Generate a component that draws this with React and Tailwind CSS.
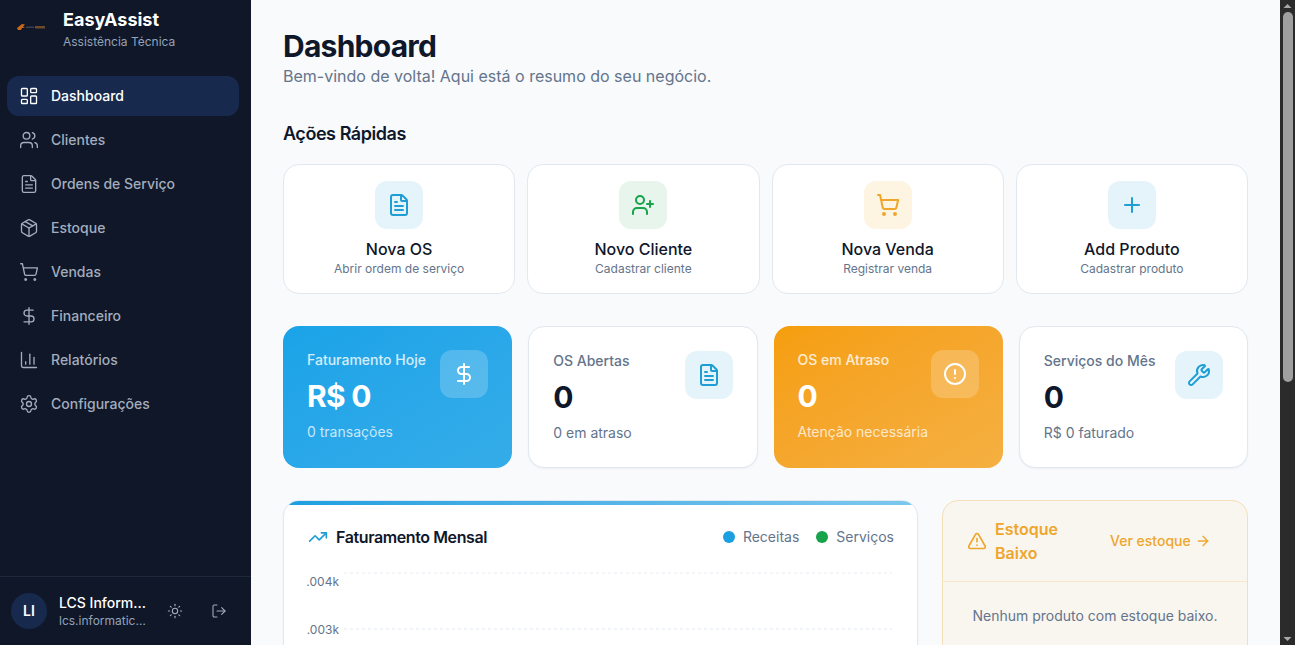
import React from "react";
import {
  LayoutDashboard,
  Users,
  FileText,
  Package,
  ShoppingCart,
  DollarSign,
  ChartColumn,
  Settings,
  Sun,
  LogOut,
  UserPlus,
  Plus,
  CircleAlert,
  Wrench,
  TrendingUp,
  TriangleAlert,
  ArrowRight,
} from "lucide-react";

const navItems = [
  { label: "Dashboard", icon: LayoutDashboard, active: true },
  { label: "Clientes", icon: Users },
  { label: "Ordens de Serviço", icon: FileText },
  { label: "Estoque", icon: Package },
  { label: "Vendas", icon: ShoppingCart },
  { label: "Financeiro", icon: DollarSign },
  { label: "Relatórios", icon: ChartColumn },
  { label: "Configurações", icon: Settings },
];

const quickActions = [
  { title: "Nova OS", sub: "Abrir ordem de serviço", icon: FileText, box: "bg-[#e5f4fb]", color: "text-[#1f9ed6]" },
  { title: "Novo Cliente", sub: "Cadastrar cliente", icon: UserPlus, box: "bg-[#e7f5ec]", color: "text-[#16a34a]" },
  { title: "Nova Venda", sub: "Registrar venda", icon: ShoppingCart, box: "bg-[#fef4e2]", color: "text-[#eea62d]" },
  { title: "Add Produto", sub: "Cadastrar produto", icon: Plus, box: "bg-[#e5f4fb]", color: "text-[#1f9ed6]" },
];

const Sidebar = () => (
  <aside className="w-[251px] h-full shrink-0 flex flex-col bg-[#0f1729]">
    <div className="flex items-center gap-[7px] pl-[16px] pt-[4px] h-[56px]">
      {/* logo is tiny in the shot, just a mark and a smudge of text */}
      <svg width="40" height="40" viewBox="0 0 40 40" className="shrink-0">
        <path d="M1 18 L6 14 L9 14.5 L7 16.5 L9 17.5 L6 18 L5 20 L2 20 Z" fill="#c9691c" />
        <rect x="10" y="16.5" width="8" height="1.5" fill="#3a3f4d" />
        <rect x="19" y="16" width="10" height="2.5" fill="#6e4a2c" />
      </svg>
      <div className="-mt-[4px]">
        <div className="text-lg leading-[28px] font-bold text-white">EasyAssist</div>
        <div className="text-xs leading-[16px] text-[#94a3b8]">Assistência Técnica</div>
      </div>
    </div>
    <nav className="flex flex-col gap-[4px] pl-[7px] pr-[12px] mt-[20px]">
      {navItems.map((item) => (
        <div
          key={item.label}
          className={`h-[40px] flex items-center gap-[12px] px-[12px] rounded-xl text-sm font-medium ${
            item.active ? "bg-[#172a4d] text-white" : "text-[#a3adbd]"
          }`}
        >
          <item.icon className="w-5 h-5 shrink-0" strokeWidth={1.6} />
          {item.label}
        </div>
      ))}
    </nav>
    <div className="mt-auto h-[69px] border-t border-[#1e293b] flex items-center pl-[11px]">
      <div className="w-9 h-9 rounded-full bg-[#172a4d] flex items-center justify-center text-sm font-semibold text-white shrink-0">
        LI
      </div>
      <div className="ml-[12px] w-[88px]">
        <div className="text-sm leading-[20px] font-medium text-white truncate">LCS Informática</div>
        <div className="text-xs leading-[16px] text-[#94a3b8] truncate">lcs.informatica@gmail.com</div>
      </div>
      <Sun className="w-4 h-4 ml-[20px] text-[#a3adbd]" strokeWidth={1.6} />
      <LogOut className="w-4 h-4 ml-[28px] text-[#a3adbd]" strokeWidth={1.6} />
    </div>
  </aside>
);

const QuickCard = ({ title, sub, icon: Icon, box, color }) => (
  <div className="h-[130px] bg-white border border-[#e2e8f0] rounded-2xl flex flex-col items-center pt-[16px]">
    <div className={`w-12 h-12 rounded-xl flex items-center justify-center ${box}`}>
      <Icon className={`w-6 h-6 ${color}`} strokeWidth={2} />
    </div>
    <div className="mt-[8px] text-base leading-[24px] font-medium text-[#0f172a]">{title}</div>
    <div className="text-xs leading-[16px] text-[#64748b]">{sub}</div>
  </div>
);

const SolidStat = ({ label, value, sub, icon: Icon, bg }) => (
  <div className={`h-[142px] rounded-2xl p-[24px] flex justify-between text-white ${bg}`}>
    <div>
      <div className="text-sm leading-[20px] font-medium text-white/80">{label}</div>
      <div className="mt-[8px] text-3xl leading-[36px] font-bold tracking-tight">{value}</div>
      <div className="mt-[8px] text-sm leading-[20px] text-white/75">{sub}</div>
    </div>
    <div className="w-12 h-12 rounded-xl bg-white/20 flex items-center justify-center shrink-0">
      <Icon className="w-6 h-6 text-white" strokeWidth={2} />
    </div>
  </div>
);

const WhiteStat = ({ label, value, sub, icon: Icon }) => (
  <div className="h-[142px] rounded-2xl p-[24px] flex justify-between bg-white border border-[#e2e8f0] shadow-[0_1px_2px_rgba(0,0,0,0.05)]">
    <div>
      <div className="text-sm leading-[20px] font-medium text-[#64748b]">{label}</div>
      <div className="mt-[8px] text-3xl leading-[36px] font-bold tracking-tight text-[#0f172a]">{value}</div>
      <div className="mt-[8px] text-sm leading-[20px] text-[#64748b]">{sub}</div>
    </div>
    <div className="w-12 h-12 rounded-xl bg-[#e5f4fb] flex items-center justify-center shrink-0">
      <Icon className="w-6 h-6 text-[#1f9ed6]" strokeWidth={2} />
    </div>
  </div>
);

const RevenueChart = () => (
  <div className="bg-white border border-[#e2e8f0] rounded-2xl overflow-hidden shadow-[0_1px_2px_rgba(0,0,0,0.05)] h-[300px]">
    <div className="h-[4px] bg-gradient-to-r from-[#1a9fe0] to-[#7cc8ee]" />
    <div className="pl-[24px] pr-[23px] pt-[20px]">
      <div className="flex items-center justify-between h-[24px]">
        <div className="flex items-center gap-[8px]">
          <TrendingUp className="w-5 h-5 text-[#1f9ed6]" strokeWidth={2} />
          <span className="text-base font-semibold text-[#0f172a] tracking-[-0.4px]">Faturamento Mensal</span>
        </div>
        <div className="flex items-center gap-[17px] text-sm text-[#64748b]">
          <span className="flex items-center gap-[8px]">
            <span className="w-3 h-3 rounded-full bg-[#1a9fe0]" />
            Receitas
          </span>
          <span className="flex items-center gap-[8px]">
            <span className="w-3 h-3 rounded-full bg-[#16a34a]" />
            Serviços
          </span>
        </div>
      </div>
      <svg width="585" height="120" className="mt-[12px] block overflow-visible">
        <line x1="36" x2="584" y1="12" y2="12" stroke="#e8edf3" strokeDasharray="3 3" />
        <line x1="36" x2="584" y1="68" y2="68" stroke="#e2e8f0" strokeDasharray="3 3" />
        <text x="31" y="25" textAnchor="end" fontSize="12" fill="#64748b" style={{ fontFamily: "Inter" }}>.004k</text>
        <text x="31" y="73" textAnchor="end" fontSize="12" fill="#64748b" style={{ fontFamily: "Inter" }}>.003k</text>
      </svg>
    </div>
  </div>
);

const LowStock = () => (
  <div className="bg-[#f9f6f0] border border-[#f4dfb8] rounded-2xl h-[300px]">
    <div className="h-[81px] border-b border-[#f6e6cb] flex items-center pl-[24px]">
      <TriangleAlert className="w-5 h-5 text-[#eea62d] shrink-0" strokeWidth={2} />
      <span className="ml-[8px] w-[70px] text-base leading-[24px] font-semibold text-[#eea62d]">Estoque Baixo</span>
      <span className="ml-[45px] flex items-center gap-[4px] text-sm font-medium text-[#eea62d]">
        Ver estoque
        <ArrowRight className="w-4 h-4" strokeWidth={2} />
      </span>
    </div>
    <div className="pt-[24px] text-center text-sm leading-[20px] text-[#64748b]">Nenhum produto com estoque baixo.</div>
  </div>
);

const FakeScrollbar = () => (
  <div className="w-[15px] h-full shrink-0 bg-[#2b2b2b] flex flex-col items-center">
    <svg width="15" height="12" viewBox="0 0 15 12" className="shrink-0">
      <path d="M3.5 8 L7.5 4 L11.5 8 Z" fill="#a8a8a8" />
    </svg>
    <div className="w-[10px] h-[370px] rounded-full bg-[#9f9f9f]" />
    <div className="flex-1" />
    <svg width="15" height="12" viewBox="0 0 15 12" className="shrink-0">
      <path d="M3.5 4 L7.5 8 L11.5 4 Z" fill="#a8a8a8" />
    </svg>
  </div>
);

export default function App() {
  return (
    <div className="flex h-screen overflow-hidden bg-[#f8fafc] font-['Inter',sans-serif]">
      <Sidebar />
      <main className="flex-1 min-w-0 h-full overflow-hidden px-[32px] pt-[28px]">
        <h1 className="text-3xl leading-[36px] font-bold tracking-tight text-[#0f172a]">Dashboard</h1>
        <p className="text-base leading-[24px] text-[#64748b]">Bem-vindo de volta! Aqui está o resumo do seu negócio.</p>

        <h2 className="mt-[32px] text-lg leading-[28px] font-semibold tracking-tight text-[#0f172a]">Ações Rápidas</h2>
        <div className="mt-[16px] grid grid-cols-4 gap-[12px]">
          {quickActions.map((action) => (
            <QuickCard key={action.title} {...action} />
          ))}
        </div>

        <div className="mt-[32px] grid grid-cols-4 gap-[16px]">
          <SolidStat
            label="Faturamento Hoje"
            value="R$ 0"
            sub="0 transações"
            icon={DollarSign}
            bg="bg-gradient-to-br from-[#1aa3e8] to-[#35ace9]"
          />
          <WhiteStat label="OS Abertas" value="0" sub="0 em atraso" icon={FileText} />
          <SolidStat
            label="OS em Atraso"
            value="0"
            sub="Atenção necessária"
            icon={CircleAlert}
            bg="bg-gradient-to-br from-[#f59e0b] to-[#f5b041]"
          />
          <WhiteStat label="Serviços do Mês" value="0" sub="R$ 0 faturado" icon={Wrench} />
        </div>

        <div className="mt-[32px] grid grid-cols-[635px_306px] gap-[24px]">
          <RevenueChart />
          <LowStock />
        </div>
      </main>
      <FakeScrollbar />
    </div>
  );
}
